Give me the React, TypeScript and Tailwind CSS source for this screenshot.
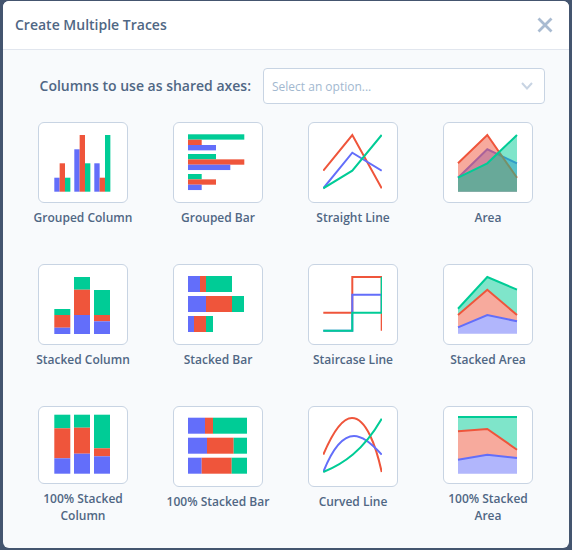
import React from 'react';

const BLUE = '#636efa';
const RED = '#ef553b';
const GREEN = '#00cc96';

// all chart coordinates are local to the 90px wide card
const Bar = ({ x, y, w, h, c }: { x: number; y: number; w: number; h: number; c: string }) => (
  <rect x={x} y={y} width={w} height={h} fill={c} />
);

const GroupedColumn = () => {
  const groups = [
    { x: 16.3, v: [55.7, 41.3, 55.7] },
    { x: 36.3, v: [27.3, 13, 41.3] },
    { x: 56.3, v: [41.3, 55.7, 13] },
  ];
  const colors = [BLUE, RED, GREEN];
  return (
    <>
      {groups.map((g) =>
        g.v.map((y, i) => <Bar key={`${g.x}-${i}`} x={g.x + i * 5.35} y={y} w={5.35} h={69.7 - y} c={colors[i]} />)
      )}
    </>
  );
};

const GroupedBar = () => {
  const rows = [
    { y: 12.3, v: [71.3, 28.7, 43] },
    { y: 32, v: [43, 71.3, 57.3] },
    { y: 52, v: [28.7, 43, 28.7] },
  ];
  const colors = [GREEN, RED, BLUE];
  return (
    <>
      {rows.map((r) =>
        r.v.map((x, i) => <Bar key={`${r.y}-${i}`} x={15} y={r.y + i * 5.35} w={x - 15} h={5.35} c={colors[i]} />)
      )}
    </>
  );
};

const Lines = ({ id, lines }: { id: string; lines: [string, string][] }) => (
  <>
    <defs>
      <clipPath id={id}>
        <rect x="15" y="10" width="59" height="60" />
      </clipPath>
    </defs>
    <g clipPath={`url(#${id})`}>
      {lines.map(([d, c]) => (
        <path key={c} d={d} fill="none" stroke={c} strokeWidth="2" />
      ))}
    </g>
  </>
);

const StraightLine = () => (
  <Lines
    id="straight"
    lines={[
      ['M15.3 48.7L44.3 13L73.7 66.3', RED],
      ['M15.3 66.3L44.3 30.7L73.7 48.7', BLUE],
      ['M15.3 66.3L44.3 48.7L73.7 13', GREEN],
    ]}
  />
);

// each trace paints fill + line, so the later fill tints the earlier line
const AreaChart = () => (
  <>
    <path d="M15 55.7L44.3 27.3L74 41.3V69.7H15Z" fill={BLUE} fillOpacity="0.5" />
    <path d="M15 55.7L44.3 27.3L74 41.3" fill="none" stroke={BLUE} strokeWidth="2" />
    <path d="M15 41.3L44.3 13L74 55.7V69.7H15Z" fill={RED} fillOpacity="0.5" />
    <path d="M15 41.3L44.3 13L74 55.7" fill="none" stroke={RED} strokeWidth="2" />
    <path d="M15 55.7L44.3 41.3L74 13V69.7H15Z" fill={GREEN} fillOpacity="0.5" />
    <path d="M15 55.7L44.3 41.3L74 13" fill="none" stroke={GREEN} strokeWidth="2" />
  </>
);

const Columns = ({ cols }: { cols: { x: number; s: number[] }[] }) => (
  <>
    {cols.map((c) => (
      <React.Fragment key={c.x}>
        <Bar x={c.x} y={c.s[0]} w={16} h={c.s[1] - c.s[0]} c={GREEN} />
        <Bar x={c.x} y={c.s[1]} w={16} h={c.s[2] - c.s[1]} c={RED} />
        <Bar x={c.x} y={c.s[2]} w={16} h={c.s[3] - c.s[2]} c={BLUE} />
      </React.Fragment>
    ))}
  </>
);

const Rows = ({ rows }: { rows: { y: number; s: number[] }[] }) => (
  <>
    {rows.map((r) => (
      <React.Fragment key={r.y}>
        <Bar x={r.s[0]} y={r.y} w={r.s[1] - r.s[0]} h={16} c={BLUE} />
        <Bar x={r.s[1]} y={r.y} w={r.s[2] - r.s[1]} h={16} c={RED} />
        <Bar x={r.s[2]} y={r.y} w={r.s[3] - r.s[2]} h={16} c={GREEN} />
      </React.Fragment>
    ))}
  </>
);

const Bands = ({ top, blue, red, green, bottom }: { top: string; blue: string; red: string; green: string; bottom: number }) => {
  const back = (d: string) => d.split('L').reverse().join('L');
  return (
    <>
      <path d={`M${blue}L74 ${bottom}L15 ${bottom}Z`} fill={BLUE} fillOpacity="0.5" />
      <path d={`M${red}L${back(blue)}Z`} fill={RED} fillOpacity="0.5" />
      <path d={`M${top}L${back(red)}Z`} fill={GREEN} fillOpacity="0.5" />
      <path d={`M${blue}`} fill="none" stroke={BLUE} strokeWidth="2" />
      <path d={`M${red}`} fill="none" stroke={RED} strokeWidth="2" />
      <path d={`M${green}`} fill="none" stroke={GREEN} strokeWidth="2" />
    </>
  );
};

const items: { label: string; short?: boolean; chart: React.ReactNode }[] = [
  { label: 'Grouped Column', chart: <GroupedColumn /> },
  { label: 'Grouped Bar', chart: <GroupedBar /> },
  { label: 'Straight Line', chart: <StraightLine /> },
  { label: 'Area', chart: <AreaChart /> },
  {
    label: 'Stacked Column',
    chart: (
      <Columns
        cols={[
          { x: 16.3, s: [45, 51, 63.7, 70] },
          { x: 36, s: [13, 25.7, 51, 70] },
          { x: 56, s: [26, 51, 57.3, 70] },
        ]}
      />
    ),
  },
  {
    label: 'Stacked Bar',
    chart: (
      <Rows
        rows={[
          { y: 12, s: [15, 27, 33, 59] },
          { y: 32, s: [15, 33, 59, 71] },
          { y: 52, s: [15, 21, 33, 40] },
        ]}
      />
    ),
  },
  {
    label: 'Staircase Line',
    chart: (
      <Lines
        id="stairs"
        lines={[
          ['M15.3 48.7H44.3V13H73.7V66.7', RED],
          ['M15.3 66.7H44.3V30.7H73.7V48.7', BLUE],
          ['M15.3 66.7H44.3V48.7H73.7V13', GREEN],
        ]}
      />
    ),
  },
  {
    label: 'Stacked Area',
    chart: (
      <Bands
        top="15 44.7L44.3 13L74 25.7"
        green="15 44.7L44.3 13L74 25.7"
        red="15 51L44.3 25.7L74 51"
        blue="15 63.3L44.3 51L74 57.3"
        bottom={69.7}
      />
    ),
  },
  {
    label: '100% Stacked Column',
    short: true,
    chart: (
      <Columns
        cols={[
          { x: 16.3, s: [8.7, 22.3, 52.3, 67.7] },
          { x: 36, s: [8.7, 21.7, 47.7, 67.7] },
          { x: 56, s: [8.7, 42.3, 50.3, 67.7] },
        ]}
      />
    ),
  },
  {
    label: '100% Stacked Bar',
    chart: (
      <Rows
        rows={[
          { y: 11.7, s: [15, 32, 40, 74] },
          { y: 31.7, s: [15, 34, 60.7, 74] },
          { y: 51.7, s: [15, 28.7, 58.7, 74] },
        ]}
      />
    ),
  },
  {
    label: 'Curved Line',
    chart: (
      <Lines
        id="curved"
        lines={[
          ['M15.3 48.7C24 28 34 12 44 12C58 12 68 40 73.7 66', RED],
          ['M15.3 66C24 44 34 30 46 30C56 30 66 40 73.7 48.7', BLUE],
          ['M15.3 66C35 58 55 45 73.7 12.7', GREEN],
        ]}
      />
    ),
  },
  {
    label: '100% Stacked Area',
    short: true,
    chart: (
      <Bands
        top="15 10L44.3 10L74 10"
        green="15 11L44.3 11L74 11"
        red="15 25.3L44.3 23L74 43.7"
        blue="15 53.7L44.3 48.7L74 52"
        bottom={67.7}
      />
    ),
  },
];

const App: React.FC = () => {
  return (
    <div className="w-[572px] h-[550px] overflow-hidden bg-[#44556f] pl-[3px] pt-px font-['Open_Sans',sans-serif] text-[#506784]">
      <div className="w-[566px] h-[547px] rounded-md overflow-hidden bg-[#f8fafc] flex flex-col">
        <div className="h-[49px] shrink-0 bg-white border-b border-[#e1e6ee] flex items-center justify-between pl-3 pr-4">
          <h1 className="text-sm font-semibold">Create Multiple Traces</h1>
          <svg width="16" height="16" viewBox="0 0 16 16" className="text-[#a9bbd1]">
            <path d="M1.5 1.5L14.5 14.5M14.5 1.5L1.5 14.5" fill="none" stroke="currentColor" strokeWidth="2.8" />
          </svg>
        </div>

        <div className="flex items-center justify-end gap-3 pr-6 pt-[18px] pb-[18px]">
          <span className="text-sm font-semibold">Columns to use as shared axes:</span>
          <div className="w-[282px] h-9 bg-white border border-[#c8d4e3] rounded flex items-center justify-between pl-2 pr-[11px]">
            <span className="text-xs text-[#a2b8cf] pt-px">Select an option...</span>
            <svg width="12" height="8" viewBox="0 0 12 8">
              <path d="M1 1L6 6.5L11 1" fill="none" stroke="#c8d4e3" strokeWidth="2" />
            </svg>
          </div>
        </div>

        <div className="grid grid-cols-[repeat(4,135px)] auto-rows-[142px] pl-[12.5px]">
          {items.map((item) => (
            <div key={item.label} className="flex flex-col items-center">
              <div className="w-[90px] bg-white border border-[#c8d4e3] rounded-md overflow-hidden">
                <svg
                  width="88"
                  height={item.short ? 76 : 79}
                  viewBox={item.short ? '1 1 88 76' : '1 1 88 79'}
                  className="block"
                >
                  {item.chart}
                </svg>
              </div>
              <div className="mt-[6px] w-[108px] text-center text-xs leading-[17px] font-semibold">{item.label}</div>
            </div>
          ))}
        </div>
      </div>
    </div>
  );
};

export default App;
